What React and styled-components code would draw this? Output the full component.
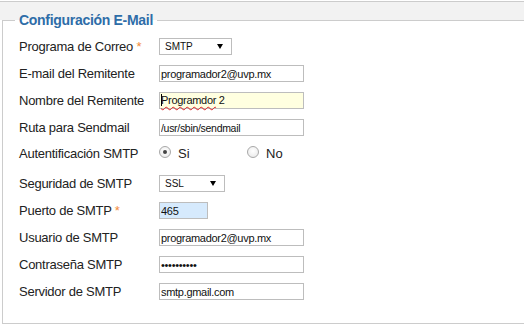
import React from 'react';
import styled, { createGlobalStyle } from 'styled-components';

const GlobalStyle = createGlobalStyle`
	html, body {
		margin: 0;
		padding: 0;
		background: #FFFFFF;
		overflow: hidden;
	}
	body {
		font-family: "Liberation Sans", Arial, sans-serif;
	}
`;

const Page = styled.div`
	width: 524px;
	height: 325px;
	overflow: hidden;
`;

const Band = styled.div`
	margin-top: 1px;
	height: 18px;
	background: #F2F2F2;
	border-top: 1px solid #CCCCCC;
`;

const Fieldset = styled.fieldset`
	margin: -8px -20px 0 2px;
	padding: 5px 0 18px 16px;
	border: 1px solid #CCCCCC;
	min-width: 0;
`;

const Legend = styled.legend`
	padding: 0 4px;
	margin-left: -4px;
	line-height: 16px;
	font-size: 14px;
	font-weight: bold;
	letter-spacing: -0.3px;
	color: #2E6DA8;
`;

const Row = styled.div`
	display: grid;
	grid-template-columns: 140px 1fr;
	align-items: center;
	height: ${props => props.h || 27}px;
	margin-top: ${props => props.mt || 0}px;
`;

const Label = styled.label`
	font-size: 13px;
	letter-spacing: -0.25px;
	color: #222222;
`;

const Req = styled.span`
	color: #F28A3A;
`;

const Input = styled.input`
	box-sizing: border-box;
	width: ${props => props.w || 145}px;
	height: 17px;
	margin: 0;
	padding: 0 1px;
	border: 1px solid #BDBDBD;
	border-radius: 0;
	outline: none;
	background: ${props => props.bg || '#FFFFFF'};
	font-family: "Liberation Sans", Arial, sans-serif;
	font-size: ${props => props.fs || 11}px;
	letter-spacing: -0.3px;
	color: #111111;
`;

const FakeInput = styled.div`
	box-sizing: border-box;
	width: 145px;
	height: 17px;
	padding: 0 1px;
	border: 1px solid #BDBDBD;
	background: #FFFFE0;
	font-size: 11px;
	line-height: 15px;
	letter-spacing: -0.3px;
	color: #111111;
	white-space: nowrap;

	.caret {
		display: inline-block;
		width: 1px;
		height: 12px;
		margin-right: -1px;
		background: #000000;
		vertical-align: -2px;
	}

	.typo {
		text-decoration: underline wavy #E02020;
		text-decoration-thickness: 1px;
		text-underline-offset: 2px;
	}
`;

const Select = styled.div`
	box-sizing: border-box;
	width: ${props => props.w}px;
	height: 17px;
	padding: 0 8px 0 5px;
	border: 1px solid #BDBDBD;
	display: flex;
	align-items: center;
	justify-content: space-between;
	font-size: 10px;
	color: #111111;
`;

const Radios = styled.div`
	display: flex;
	align-items: center;
`;

const Option = styled.div`
	display: flex;
	align-items: center;
	width: ${props => props.w || 'auto'};
	font-size: 13px;
	color: #222222;
`;

const Radio = styled.span`
	box-sizing: border-box;
	width: 12px;
	height: 12px;
	margin: 0 7px 3px 0;
	border-radius: 50%;
	border: 1px solid #A8A8A8;
	background: radial-gradient(circle at 50% 40%, #FFFFFF 0%, #E6E6E6 100%);
	display: flex;
	align-items: center;
	justify-content: center;

	&::after {
		content: '';
		width: 4px;
		height: 4px;
		border-radius: 50%;
		background: ${props => props.checked ? '#444444' : 'transparent'};
	}
`;

function Arrow() {
	return (
		<svg width="6" height="5" viewBox="0 0 6 5">
			<polygon points="0,0 6,0 3,5" fill="#000000" />
		</svg>
	);
}

function App() {
	return (
		<Page>
			<GlobalStyle />
			<Band />
			<Fieldset>
				<Legend>Configuración E-Mail</Legend>

				<Row>
					<Label>Programa de Correo <Req>*</Req></Label>
					<Select w={73}><span>SMTP</span><Arrow /></Select>
				</Row>
				<Row>
					<Label>E-mail del Remitente</Label>
					<Input readOnly value="programador2@uvp.mx" />
				</Row>
				<Row>
					<Label>Nombre del Remitente</Label>
					<FakeInput>
						<span className="caret" />
						<span className="typo">Programdor</span> 2
					</FakeInput>
				</Row>
				<Row>
					<Label>Ruta para Sendmail</Label>
					<Input readOnly value="/usr/sbin/sendmail" fs={10.5} />
				</Row>
				<Row h={25}>
					<Label>Autentificación SMTP</Label>
					<Radios>
						<Option w="88px"><Radio checked />Si</Option>
						<Option><Radio />No</Option>
					</Radios>
				</Row>
				<Row mt={4}>
					<Label>Seguridad de SMTP</Label>
					<Select w={66}><span>SSL</span><Arrow /></Select>
				</Row>
				<Row>
					<Label>Puerto de SMTP <Req>*</Req></Label>
					<Input readOnly value="465" w={49} bg="#D6EAFD" />
				</Row>
				<Row>
					<Label>Usuario de SMTP</Label>
					<Input readOnly value="programador2@uvp.mx" />
				</Row>
				<Row>
					<Label>Contraseña SMTP</Label>
					<Input readOnly type="password" value="1234567890" />
				</Row>
				<Row>
					<Label>Servidor de SMTP</Label>
					<Input readOnly value="smtp.gmail.com" />
				</Row>
			</Fieldset>
		</Page>
	);
}

export default App;
